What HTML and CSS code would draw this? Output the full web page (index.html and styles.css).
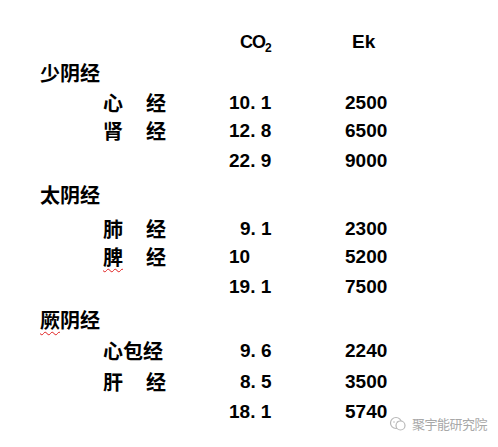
FILE: index.html
```html
<!DOCTYPE html>
<html lang="zh">
<head>
<meta charset="utf-8">
<link rel="stylesheet" href="styles.css">
</head>
<body>
<div class="sheet">
  <div class="row head"><span></span><span></span><span class="num co">CO<sub>2</sub></span><span class="num ek">Ek</span></div>

  <div class="row group g1"><span class="title">少阴经</span></div>
  <div class="row r-a"><span></span><span class="name">心<i class="gap"></i>经</span><span class="num">10. 1</span><span class="num">2500</span></div>
  <div class="row r-b"><span></span><span class="name">肾<i class="gap"></i>经</span><span class="num">12. 8</span><span class="num">6500</span></div>
  <div class="row r-c"><span></span><span></span><span class="num">22. 9</span><span class="num">9000</span></div>

  <div class="row group g2"><span class="title">太阴经</span></div>
  <div class="row r-a2"><span></span><span class="name">肺<i class="gap"></i>经</span><span class="num pad">9. 1</span><span class="num">2300</span></div>
  <div class="row r-b"><span></span><span class="name"><span class="squig">脾</span><i class="gap"></i>经</span><span class="num">10</span><span class="num">5200</span></div>
  <div class="row r-c"><span></span><span></span><span class="num">19. 1</span><span class="num">7500</span></div>

  <div class="row group g3"><span class="title"><span class="squig">厥</span>阴经</span></div>
  <div class="row r-a3"><span></span><span class="name">心包经</span><span class="num pad">9. 6</span><span class="num">2240</span></div>
  <div class="row r-b3"><span></span><span class="name">肝<i class="gap"></i>经</span><span class="num pad">8. 5</span><span class="num">3500</span></div>
  <div class="row r-c"><span></span><span></span><span class="num">18. 1</span><span class="num">5740</span></div>

  <div class="mark">
    <svg class="mark-icon" width="18" height="16" viewBox="0 0 18 16">
      <circle cx="7" cy="7" r="5.5" fill="none" stroke="#b8b8b8" stroke-width="1.2"/>
      <circle cx="11.5" cy="9.5" r="4.5" fill="#fff" stroke="#b8b8b8" stroke-width="1.2"/>
      <circle cx="5" cy="6" r="0.8" fill="#b8b8b8"/>
      <circle cx="8.5" cy="6" r="0.8" fill="#b8b8b8"/>
    </svg>
    <span class="mark-text">聚宇能研究院</span>
  </div>
</div>
</body>
</html>
```

FILE: styles.css
```css
html, body {
  margin: 0;
  padding: 0;
  background: #fff;
}
body {
  width: 498px;
  height: 447px;
  overflow: hidden;
  color: #000;
  font-family: "Liberation Sans", "Noto Sans CJK SC", sans-serif;
}
.sheet {
  position: relative;
  padding: 27px 0 0 40px;
  box-sizing: border-box;
  height: 447px;
}
.row {
  display: grid;
  grid-template-columns: 63px 126px 116px auto;
  height: 30px;
  align-items: center;
  white-space: nowrap;
}
.title, .name {
  font-family: "Noto Sans CJK SC", sans-serif;
  font-weight: 700;
  font-size: 20px;
  line-height: 30px;
}
.title {
  grid-column: 1 / 3;
}
.gap {
  display: inline-block;
  width: 23px;
}
.num {
  font-family: "Liberation Sans", sans-serif;
  font-weight: 700;
  font-size: 19px;
  line-height: 30px;
}
.pad {
  padding-left: 11px;
}
.co {
  padding-left: 11px;
  font-size: 18px;
  letter-spacing: -1px;
}
.co sub {
  font-size: 12px;
  vertical-align: -4px;
  line-height: 0;
  letter-spacing: 0;
}
.ek {
  padding-left: 7px;
}
.g1 { margin-top: 1px; }
.r-b { margin-top: -2px; }
.g2 { margin-top: 4px; }
.r-a2 { margin-top: 4px; }
.g3 { margin-top: 3px; }
.r-a3 { margin-top: 1px; }
.r-b3 { margin-top: 1px; }
.squig {
  text-decoration: underline wavy #e02020;
  text-decoration-thickness: 1px;
  text-underline-offset: 3px;
}
.mark {
  position: absolute;
  left: 389px;
  top: 414px;
  display: flex;
  align-items: center;
  gap: 5px;
}
.mark-text {
  font-family: "Noto Sans CJK SC", sans-serif;
  font-size: 13px;
  color: #a8a8a8;
  letter-spacing: -0.5px;
}
```
